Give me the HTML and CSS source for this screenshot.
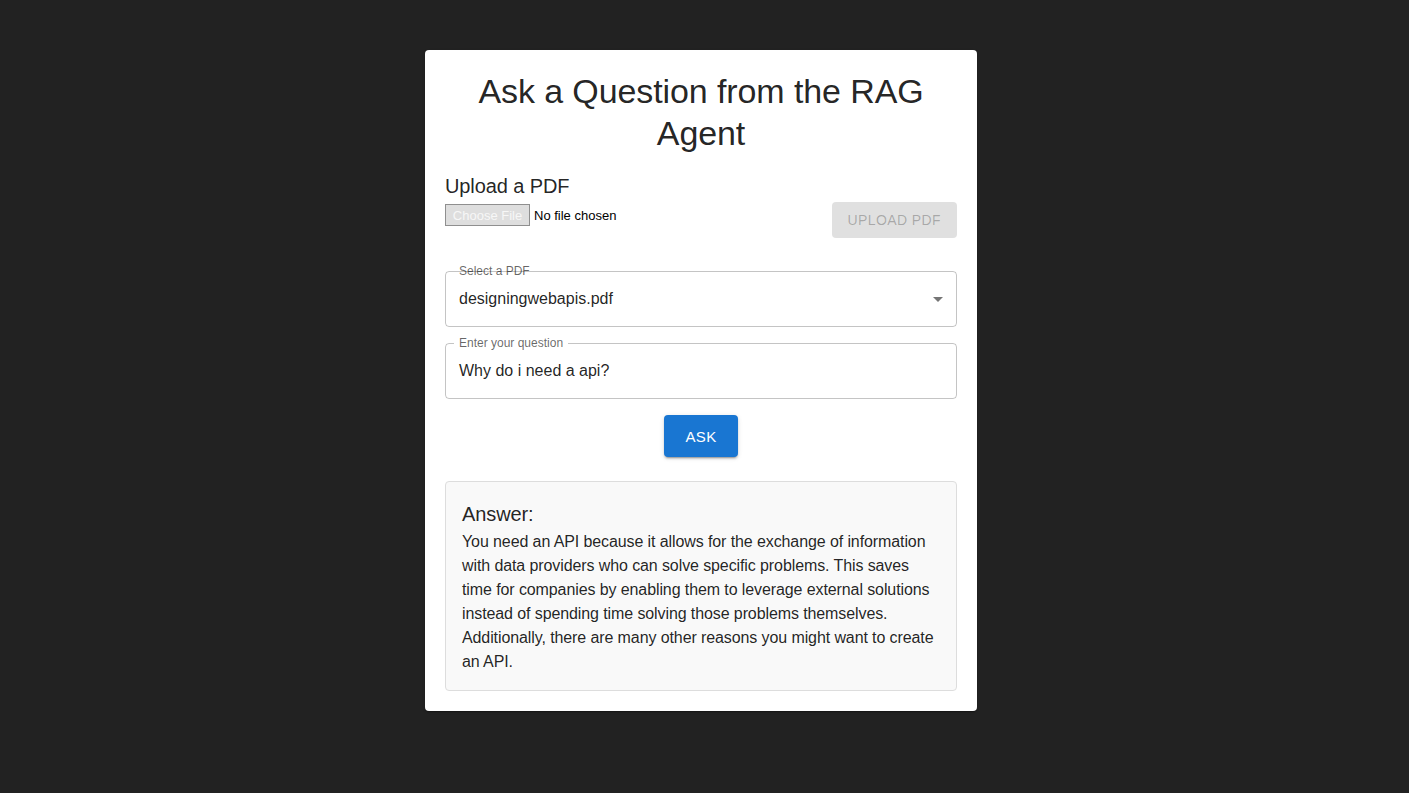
FILE: index.html
```html
<!DOCTYPE html>
<html lang="en">
<head>
<meta charset="utf-8">
<title>RAG Agent</title>
<link rel="stylesheet" href="styles.css">
</head>
<body>
<div class="page">
  <div class="card">
    <h1 class="title">Ask a Question from the RAG Agent</h1>
    <h2 class="subtitle">Upload a PDF</h2>
    <div class="upload-row">
      <div class="file-input">
        <span class="file-btn">Choose File</span>
        <span class="file-name">No file chosen</span>
      </div>
      <button class="btn btn-disabled" disabled>UPLOAD PDF</button>
    </div>
    <div class="field field-select">
      <span class="field-label">Select a PDF</span>
      <div class="outline"></div>
      <div class="field-value">designingwebapis.pdf</div>
      <svg class="dropdown-icon" viewBox="0 0 24 24" width="24" height="24"><path d="M7 10l5 5 5-5z"/></svg>
    </div>
    <div class="field field-question">
      <fieldset class="outline notched"><legend><span>Enter your question</span></legend></fieldset>
      <span class="field-label">Enter your question</span>
      <div class="field-value">Why do i need a api?</div>
    </div>
    <div class="ask-row">
      <button class="btn btn-primary">ASK</button>
    </div>
    <div class="answer">
      <h3 class="answer-title">Answer:</h3>
      <p class="answer-text">You need an API because it allows for the exchange of information with data providers who can solve specific problems. This saves time for companies by enabling them to leverage external solutions instead of spending time solving those problems themselves. Additionally, there are many other reasons you might want to create an API.</p>
    </div>
  </div>
</div>
</body>
</html>
```

FILE: styles.css
```css
html, body {
  margin: 0;
  padding: 0;
  background: #222222;
  font-family: "Liberation Sans", Arial, Helvetica, sans-serif;
  color: rgba(0, 0, 0, 0.87);
}

.page {
  min-height: 793px;
  box-sizing: border-box;
  padding: 50px 7px 0 0;
  display: flex;
  justify-content: center;
  align-items: flex-start;
}

.card {
  width: 552px;
  box-sizing: border-box;
  background: #fff;
  border-radius: 4px;
  padding: 20px;
  box-shadow: 0 2px 1px -1px rgba(0,0,0,0.2), 0 1px 1px 0 rgba(0,0,0,0.14), 0 1px 3px 0 rgba(0,0,0,0.12);
  display: flex;
  flex-direction: column;
}

.title {
  margin: 0 0 16px;
  font-size: 34px;
  font-weight: 400;
  line-height: 42px;
  text-align: center;
  letter-spacing: -0.1px;
}

.subtitle {
  margin: 0;
  font-size: 20px;
  font-weight: 400;
  line-height: 32px;
  letter-spacing: -0.1px;
}

.upload-row {
  display: flex;
  justify-content: space-between;
  align-items: flex-start;
  margin-bottom: 33px;
}

.file-input {
  display: flex;
  align-items: center;
  margin-top: 2px;
  font-size: 13px;
}

.file-btn {
  box-sizing: border-box;
  height: 22px;
  width: 85px;
  display: flex;
  align-items: center;
  justify-content: center;
  background: #dedede;
  border: 1px solid #8f8f8f;
  color: #f7f7f7;
  font-size: 13px;
}

.file-name {
  margin-left: 4px;
  color: #000;
}

.btn {
  font-family: "Liberation Sans", Arial, sans-serif;
  border: none;
  border-radius: 4px;
  text-transform: uppercase;
  white-space: nowrap;
  cursor: pointer;
}

.btn-disabled {
  height: 36px;
  padding: 0 16px;
  font-size: 14px;
  letter-spacing: 0.4px;
  background: #e0e0e0;
  color: rgba(0, 0, 0, 0.26);
}

.field {
  position: relative;
  height: 56px;
  box-sizing: border-box;
  margin-bottom: 16px;
}

.outline {
  position: absolute;
  inset: 0;
  border: 1px solid rgba(0, 0, 0, 0.23);
  border-radius: 4px;
  pointer-events: none;
}

fieldset.outline {
  margin: 0;
  padding: 0 8px;
  top: -5px;
  min-width: 0;
  text-align: left;
}

fieldset.outline legend {
  float: unset;
  width: auto;
  padding: 0;
  height: 11px;
  font-size: 12px;
  line-height: 11px;
  visibility: hidden;
  white-space: nowrap;
}

fieldset.outline legend span {
  padding: 0 5px;
  display: inline-block;
}

.field-label {
  position: absolute;
  left: 14px;
  top: -6px;
  font-size: 12px;
  line-height: 12px;
  color: rgba(0, 0, 0, 0.6);
  white-space: nowrap;
  z-index: 1;
}

.field-value {
  padding: 0 14px;
  height: 56px;
  display: flex;
  align-items: center;
  font-size: 16px;
  color: rgba(0, 0, 0, 0.87);
}

.dropdown-icon {
  position: absolute;
  right: 7px;
  top: 16px;
  fill: rgba(0, 0, 0, 0.54);
}

.ask-row {
  display: flex;
  justify-content: center;
  margin-bottom: 24px;
}

.btn-primary {
  height: 42px;
  padding: 0 22px;
  font-size: 15px;
  letter-spacing: 0.3px;
  background: #1976d2;
  color: #fff;
  box-shadow: 0 3px 1px -2px rgba(0,0,0,0.2), 0 2px 2px 0 rgba(0,0,0,0.14), 0 1px 5px 0 rgba(0,0,0,0.12);
}

.answer {
  background: #f9f9f9;
  border: 1px solid #dddddd;
  border-radius: 4px;
  padding: 16px;
}

.answer-title {
  margin: 0;
  font-size: 20px;
  font-weight: 400;
  line-height: 32px;
  letter-spacing: -0.1px;
}

.answer-text {
  margin: 0;
  font-size: 16px;
  line-height: 24px;
  letter-spacing: -0.1px;
}
```
